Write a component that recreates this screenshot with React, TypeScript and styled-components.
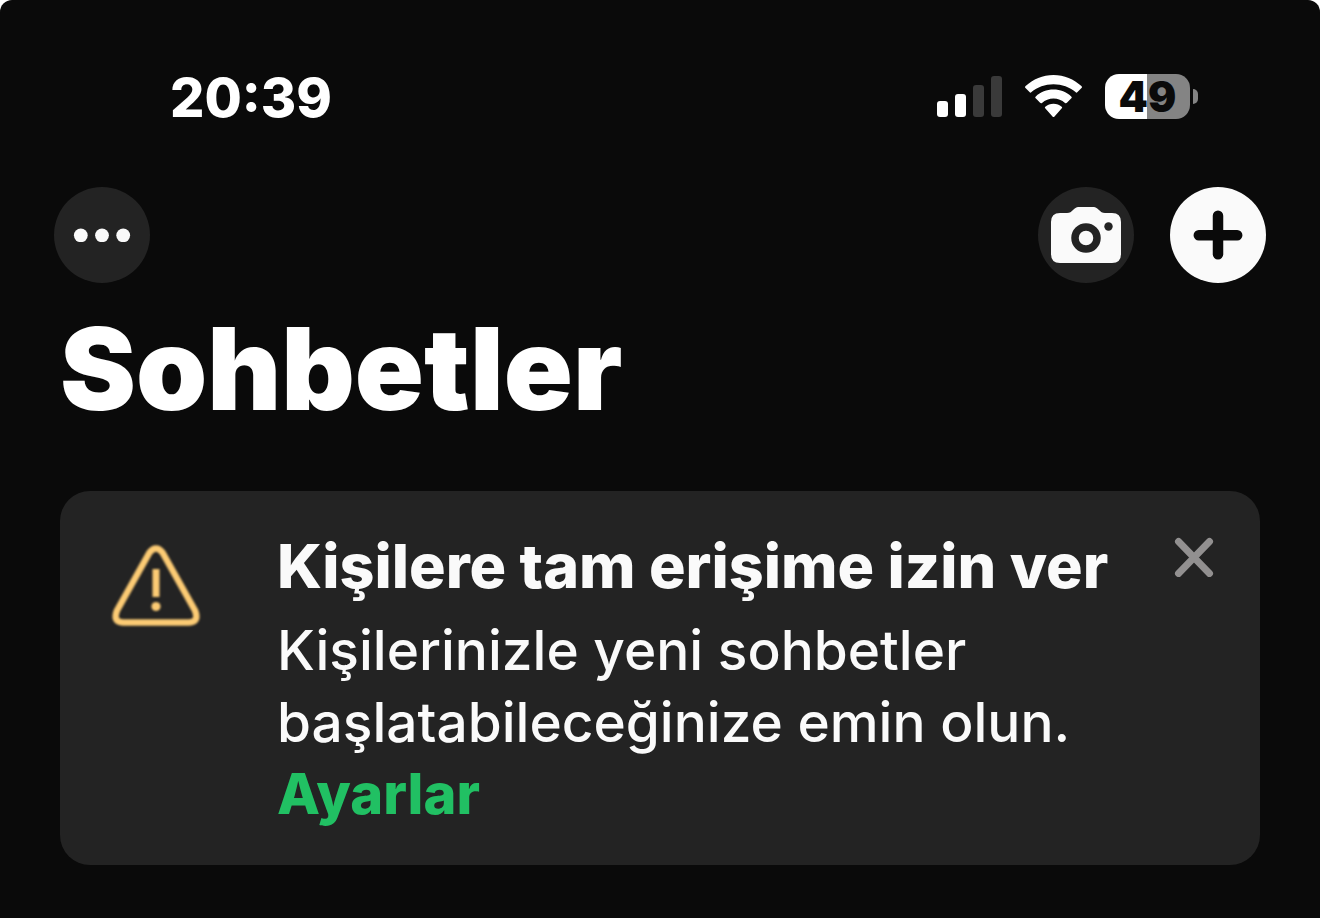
import React from "react";
import styled, { createGlobalStyle } from "styled-components";

const Global = createGlobalStyle`
  * { box-sizing: border-box; }
  html { background: #ffffff; }
  body { margin: 0; font-family: Inter, "Noto Sans", sans-serif; color: #ffffff; }
`;

const Screen = styled.main`
  min-height: 100vh;
  padding: 70px 54px 52px;
  background: #0a0a0a;
  border-radius: 12px 12px 0 0;
`;

const StatusBar = styled.header`
  display: flex;
  align-items: center;
  justify-content: space-between;
  height: 56px;
  padding: 0 68px 0 116px;
`;

const Clock = styled.time`
  font-size: 54px;
  line-height: 56px;
  font-weight: 800;
`;

const StatusIcons = styled.div`
  display: flex;
  align-items: center;
  gap: 22px;
  padding-bottom: 4px;
`;

const Battery = styled.div`
  display: flex;
  align-items: center;
  gap: 3px;
`;

const BatteryBody = styled.div`
  width: 85px;
  height: 45px;
  border-radius: 14px;
  background: linear-gradient(to right, #ffffff 50%, #848484 50%);
  color: #0a0a0a;
  font-size: 42px;
  line-height: 46px;
  font-weight: 900;
  text-align: center;
`;

const BatteryTip = styled.span`
  width: 5px;
  height: 15px;
  border-radius: 0 6px 6px 0;
  background: #848484;
`;

const Toolbar = styled.nav`
  display: flex;
  justify-content: space-between;
  margin-top: 61px;
`;

const Actions = styled.div`
  display: flex;
  gap: 36px;
`;

const RoundButton = styled.button<{ $light?: boolean }>`
  display: grid;
  place-items: center;
  width: 96px;
  height: 96px;
  padding: 0;
  border: 0;
  border-radius: 50%;
  color: ${(p) => (p.$light ? "#0a0a0a" : "#fafafa")};
  background: ${(p) => (p.$light ? "#fafafa" : "#232323")};
`;

const Title = styled.h1`
  margin: 22px 0 0 6px;
  font-size: 114px;
  line-height: 128px;
  font-weight: 900;
`;

const Notice = styled.section`
  display: flex;
  align-items: flex-start;
  margin: 58px 6px 0;
  padding: 39px 46px 35px 50px;
  border-radius: 30px;
  background: #232323;
`;

const NoticeText = styled.div`
  flex: 1;
  margin-left: 75px;
  color: #fafafa;
`;

const NoticeTitle = styled.h2`
  margin: 0 0 12px;
  font-size: 61px;
  line-height: 72px;
  font-weight: 800;
  white-space: nowrap;
`;

const NoticeBody = styled.p`
  margin: 0;
  font-size: 55px;
  line-height: 72px;
  font-weight: 500;
`;

const SettingsLink = styled.a`
  display: block;
  width: fit-content;
  color: #21c063;
  font-size: 56px;
  font-weight: 800;
  text-decoration: none;
`;

const CloseButton = styled.button`
  display: flex;
  margin-top: 7px;
  padding: 0;
  border: 0;
  background: none;
`;

const WarningMark = styled.svg`
  flex: none;
  margin-top: 14px;
  filter: blur(1px);
`;

export default function App() {
  return (
    <>
      <Global />
      <Screen>
        <StatusBar>
          <Clock>20:39</Clock>
          <StatusIcons>
            <svg width="66" height="42" viewBox="0 0 66 42" aria-hidden="true">
              <rect x="0" y="26" width="11" height="16" rx="3" fill="#fff" />
              <rect x="18" y="19" width="11" height="23" rx="3" fill="#fff" />
              <rect x="36" y="10" width="11" height="32" rx="3" fill="#3a3a3a" />
              <rect x="54" y="1" width="11" height="41" rx="3" fill="#3a3a3a" />
            </svg>
            <svg width="58" height="42" viewBox="0 -1 58 42" fill="#fff" aria-hidden="true">
              <path d="M28.500 -1C17.800 -1 8 3.200 .6 10.100c-.7.700-.7 1.300-.1 2L4.500 16.100c.7.700 1.300.7 2 0C12.400 11 20 8.200 28.500 8.200S44.600 11 50.500 16.100c.7.700 1.300.7 2 0l4-4c.6-.7.6-1.300-.1-2C49 3.200 39.200 -1 28.500 -1z" />
              <path d="M28.500 13.600c-6.800 0-13 2.600-17.700 6.800-.7.600-.7 1.200-.1 1.900l4.400 4.500c.6.600 1.200.6 1.900.1 3.100-2.700 7.100-4.300 11.500-4.300s8.400 1.600 11.500 4.300c.7.500 1.300.5 1.900-.1l4.400-4.500c.6-.7.6-1.300-.1-1.900-4.700-4.200-10.900-6.800-17.700-6.800z" />
              <path d="M28.500 27.700c-3.100 0-6 1.100-8.200 3-.6.500-.6 1-.1 1.500l7.300 8.400c.6.700 1.400.7 2 0l7.300-8.400c.5-.5.5-1-.1-1.500-2.200-1.900-5.100-3-8.200-3z" />
            </svg>
            <Battery>
              <BatteryBody>49</BatteryBody>
              <BatteryTip />
            </Battery>
          </StatusIcons>
        </StatusBar>
        <Toolbar>
          <RoundButton aria-label="Daha fazla">
            <svg width="58" height="14" viewBox="0 0 58 14" fill="currentColor">
              <circle cx="7.800" cy="7.300" r="6.900" />
              <circle cx="29" cy="7.300" r="6.900" />
              <circle cx="50.200" cy="7.300" r="6.900" />
            </svg>
          </RoundButton>
          <Actions>
            <RoundButton aria-label="Kamera">
              <svg width="72" height="58" viewBox="0 0 72 58">
                <path d="M10 7h7c3 0 4-1 6-3 2.500-2.500 4-3 7-3h12c3 0 4.500.5 7 3 2 2 3 3 6 3h7q9 0 9 9v32q0 9-9 9H10q-9 0-9-9V16q0-9 9-9z" fill="currentColor" />
                <circle cx="36" cy="32" r="11" fill="none" stroke="#232323" strokeWidth="7.500" />
                <circle cx="58.500" cy="20.500" r="4.200" fill="#232323" />
              </svg>
            </RoundButton>
            <RoundButton $light aria-label="Yeni sohbet">
              <svg width="50" height="50" viewBox="0 0 50 50" stroke="currentColor" strokeWidth="10.500" strokeLinecap="round">
                <path d="M25 5.800v38.400M5.800 25.300h38.400" />
              </svg>
            </RoundButton>
          </Actions>
        </Toolbar>
        <Title>Sohbetler</Title>
        <Notice>
          <WarningMark width="92" height="84" viewBox="0 0 92 84" fill="none" stroke="#fccb74" strokeWidth="6.500" strokeLinecap="round" strokeLinejoin="round" aria-hidden="true">
            <path d="M39.500 8.500q6.500-8 13 0L85 66.500q4.500 11.500-6 12H13q-10.500-.5-6-12z" />
            <path d="M46 25v28" strokeWidth="7" strokeLinecap="butt" />
            <circle cx="46" cy="62.500" r="4.600" fill="#fccb74" stroke="none" />
          </WarningMark>
          <NoticeText>
            <NoticeTitle>Kişilere tam erişime izin ver</NoticeTitle>
            <NoticeBody>
              Kişilerinizle yeni sohbetler başlatabileceğinize emin olun.
              <SettingsLink href="#ayarlar">Ayarlar</SettingsLink>
            </NoticeBody>
          </NoticeText>
          <CloseButton aria-label="Kapat">
            <svg width="40" height="40" viewBox="0 0 40 40" stroke="#929090" strokeWidth="7" strokeLinecap="round">
              <path d="M4.500 4.500l31 32M35.500 4.500L4.500 36.500" />
            </svg>
          </CloseButton>
        </Notice>
      </Screen>
    </>
  );
}
